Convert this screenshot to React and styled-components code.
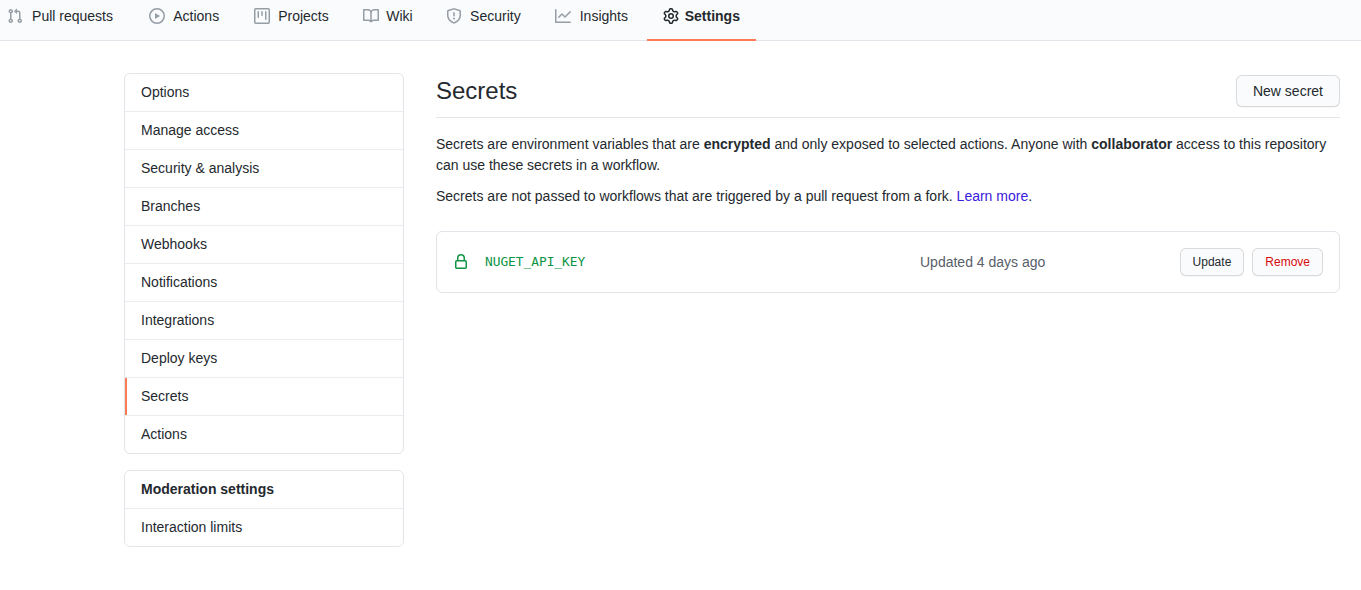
import React from "react";
import styled, { createGlobalStyle, css } from "styled-components";

const GlobalStyle = createGlobalStyle`
  *, *::before, *::after { box-sizing: border-box; }
  body {
    margin: 0;
    background: #fff;
    color: #24292e;
    font: 14px/21px "Liberation Sans", Arial, sans-serif;
    overflow: hidden;
  }
`;

const icons = {
  pull: "M7.177 3.073L9.573.677A.25.25 0 0110 .854v4.792a.25.25 0 01-.427.177L7.177 3.427a.25.25 0 010-.354zM3.75 2.5a.75.75 0 100 1.5.75.75 0 000-1.5zm-2.25.75a2.25 2.25 0 113 2.122v5.256a2.251 2.251 0 11-1.5 0V5.372A2.25 2.25 0 011.5 3.25zM11 2.5h-1V4h1a1 1 0 011 1v5.628a2.251 2.251 0 101.5 0V5A2.5 2.5 0 0011 2.5zm1 10.25a.75.75 0 111.5 0 .75.75 0 01-1.5 0zM3.75 12a.75.75 0 100 1.5.75.75 0 000-1.5z",
  play: "M1.5 8a6.5 6.5 0 1113 0 6.5 6.5 0 01-13 0zM8 0a8 8 0 100 16A8 8 0 008 0zM6.379 5.227A.25.25 0 006 5.442v5.117a.25.25 0 00.379.214l4.264-2.559a.25.25 0 000-.428L6.379 5.227z",
  project: "M1.75 0A1.75 1.75 0 000 1.75v12.5C0 15.216.784 16 1.75 16h12.5A1.75 1.75 0 0016 14.25V1.75A1.75 1.75 0 0014.25 0H1.75zM1.5 1.75a.25.25 0 01.25-.25h12.5a.25.25 0 01.25.25v12.5a.25.25 0 01-.25.25H1.75a.25.25 0 01-.25-.25V1.75zM11.75 3a.75.75 0 00-.75.75v7.5a.75.75 0 001.5 0v-7.5a.75.75 0 00-.75-.75zm-8.25.75a.75.75 0 011.5 0v5.5a.75.75 0 01-1.5 0v-5.5zM8 3a.75.75 0 00-.75.75v3.5a.75.75 0 001.5 0v-3.5A.75.75 0 008 3z",
  book: "M0 1.75A.75.75 0 01.75 1h4.253c1.227 0 2.317.59 3 1.501A3.744 3.744 0 0111.006 1h4.245a.75.75 0 01.75.75v10.5a.75.75 0 01-.75.75h-4.507a2.25 2.25 0 00-1.591.659l-.622.621a.75.75 0 01-1.06 0l-.622-.621A2.25 2.25 0 005.258 13H.75a.75.75 0 01-.75-.75V1.75zm8.755 3a2.25 2.25 0 012.25-2.25H14.5v9h-3.757c-.71 0-1.4.201-1.992.572l.004-7.322zm-1.504 7.324l.004-5.073-.002-2.253A2.25 2.25 0 005.003 2.5H1.5v9h3.757a3.75 3.75 0 011.994.574z",
  shield: "M7.467.133a1.75 1.75 0 011.066 0l5.25 1.68A1.75 1.75 0 0115 3.48V7c0 1.566-.32 3.182-1.303 4.682-.983 1.498-2.585 2.813-5.032 3.855a1.7 1.7 0 01-1.33 0c-2.447-1.042-4.049-2.357-5.032-3.855C1.32 10.182 1 8.566 1 7V3.48a1.75 1.75 0 011.217-1.667l5.25-1.68zm.61 1.429a.25.25 0 00-.153 0l-5.25 1.68a.25.25 0 00-.174.238V7c0 1.358.275 2.666 1.057 3.86.784 1.194 2.121 2.34 4.366 3.297a.2.2 0 00.154 0c2.245-.956 3.582-2.104 4.366-3.298C13.225 9.666 13.5 8.36 13.5 7V3.48a.25.25 0 00-.174-.237l-5.25-1.68zM9 10.5a1 1 0 11-2 0 1 1 0 012 0zm-.25-5.75a.75.75 0 10-1.5 0v3a.75.75 0 001.5 0v-3z",
  graph: "M1.5 1.75a.75.75 0 00-1.5 0v12.5c0 .414.336.75.75.75h14.5a.75.75 0 000-1.5H1.5V1.75zm14.28 2.53a.75.75 0 00-1.06-1.06L10 7.94 7.53 5.47a.75.75 0 00-1.06 0L3.22 8.72a.75.75 0 001.06 1.06L7 7.06l2.47 2.47a.75.75 0 001.06 0l5.25-5.25z",
  gear: "M7.429 1.525a6.593 6.593 0 011.142 0c.036.003.108.036.137.146l.289 1.105c.147.56.55.967.997 1.189.174.086.341.183.501.29.417.278.97.423 1.53.27l1.102-.303c.11-.03.175.016.195.046.219.31.41.641.573.989.014.031.022.11-.059.19l-.815.806c-.411.406-.562.957-.53 1.456a4.588 4.588 0 010 .582c-.032.499.119 1.05.53 1.456l.815.806c.08.08.073.159.059.19a6.494 6.494 0 01-.573.99c-.02.029-.086.074-.195.045l-1.103-.303c-.559-.153-1.112-.008-1.529.27-.16.107-.327.204-.5.29-.449.222-.851.628-.998 1.189l-.289 1.105c-.029.11-.101.143-.137.146a6.613 6.613 0 01-1.142 0c-.036-.003-.108-.037-.137-.146l-.289-1.105c-.147-.56-.55-.967-.997-1.189a4.502 4.502 0 01-.501-.29c-.417-.278-.97-.423-1.53-.27l-1.102.303c-.11.03-.175-.016-.195-.046a6.492 6.492 0 01-.573-.989c-.014-.031-.022-.11.059-.19l.815-.806c.411-.406.562-.957.53-1.456a4.587 4.587 0 010-.582c.032-.499-.119-1.05-.53-1.456l-.815-.806c-.08-.08-.073-.159-.059-.19a6.44 6.44 0 01.573-.99c.02-.029.086-.075.195-.045l1.103.303c.559.153 1.112.008 1.529-.27.16-.107.327-.204.5-.29.449-.222.851-.628.998-1.189l.289-1.105c.029-.11.101-.143.137-.146zM8 0c-.236 0-.47.01-.701.03-.743.065-1.29.615-1.458 1.261l-.29 1.106c-.017.066-.078.158-.211.224a5.994 5.994 0 00-.668.386c-.123.082-.233.09-.3.071L3.27 2.776c-.644-.177-1.392.02-1.82.63a7.977 7.977 0 00-.704 1.217c-.315.675-.111 1.422.363 1.891l.815.806c.05.048.098.147.088.294a6.084 6.084 0 000 .772c.01.147-.038.246-.088.294l-.815.806c-.474.469-.678 1.216-.363 1.891.2.428.436.835.704 1.218.428.609 1.176.806 1.82.63l1.103-.303c.066-.019.176-.011.299.071.213.143.436.272.668.386.133.066.194.158.212.224l.289 1.106c.169.646.715 1.196 1.458 1.26a8.094 8.094 0 001.402 0c.743-.064 1.29-.614 1.458-1.26l.29-1.106c.017-.066.078-.158.211-.224a5.98 5.98 0 00.668-.386c.123-.082.233-.09.3-.071l1.102.302c.644.177 1.392-.02 1.82-.63.268-.382.505-.789.704-1.217.315-.675.111-1.422-.364-1.891l-.814-.806c-.05-.048-.098-.147-.088-.294a6.1 6.1 0 000-.772c-.01-.147.039-.246.088-.294l.814-.806c.475-.469.679-1.216.364-1.891a7.992 7.992 0 00-.704-1.218c-.428-.609-1.176-.806-1.82-.63l-1.103.303c-.066.019-.176.011-.299-.071a5.991 5.991 0 00-.668-.386c-.133-.066-.194-.158-.212-.224L10.16 1.29C9.99.645 9.444.095 8.701.031A8.094 8.094 0 008 0zm1.5 8a1.5 1.5 0 11-3 0 1.5 1.5 0 013 0zM11 8a3 3 0 11-6 0 3 3 0 016 0z",
  lock: "M4 4v2h-.25A1.75 1.75 0 002 7.75v5.5c0 .966.784 1.75 1.75 1.75h8.5A1.75 1.75 0 0014 13.25v-5.5A1.75 1.75 0 0012.25 6H12V4a4 4 0 10-8 0zm6.5 2V4a2.5 2.5 0 00-5 0v2h5zM12 7.5h.25a.25.25 0 01.25.25v5.5a.25.25 0 01-.25.25h-8.5a.25.25 0 01-.25-.25v-5.5a.25.25 0 01.25-.25H12z",
};

const Svg = styled.svg`
  display: block;
  flex: none;
  width: 16px;
  height: 16px;
  fill: currentColor;
`;

const Icon = ({ name }) => (
  <Svg viewBox="0 0 16 16" aria-hidden="true">
    <path fillRule="evenodd" d={icons[name]} />
  </Svg>
);

const RepoNav = styled.nav`
  display: flex;
  height: 41px;
  padding-right: 16px;
  background: #fafbfc;
  border-bottom: 1px solid #e1e4e8;
`;

const Tab = styled.a`
  display: flex;
  align-items: flex-start;
  gap: 6px;
  height: 41px;
  padding: 8px 16px 0;
  color: #24292e;
  border-bottom: 2px solid transparent;

  &:first-child { padding-left: 6.6px; }

  ${Svg} { color: #959da5; }

  ${({ $selected }) => $selected && css`
    font-weight: 700;
    border-bottom-color: #fd7b53;
    ${Svg} { color: #24292e; }
  `}
`;

/* The hidden bold copy keeps a tab's width the same when it is selected. */
const TabLabel = styled.span`
  display: flex;
  flex-direction: column;
  align-items: center;
  margin-top: -2px;

  &::after {
    content: attr(data-content);
    height: 0;
    overflow: hidden;
    visibility: hidden;
    font-weight: 700;
  }
`;

const Page = styled.div`
  display: flex;
  gap: 32px;
  width: 1216px;
  margin: 32px 0 0 124px;
`;

const Sidebar = styled.aside`
  display: flex;
  flex: none;
  flex-direction: column;
  gap: 16px;
  width: 280px;
`;

const Menu = styled.nav`
  border: 1px solid #e1e4e8;
  border-radius: 6px;
  overflow: hidden;
`;

const MenuHeading = styled.div`
  padding: 8px 16px;
  border-bottom: 1px solid #eaecef;
  font-weight: 700;
`;

const MenuItem = styled.a`
  display: block;
  padding: 8px 16px;

  & + & { border-top: 1px solid #eaecef; }

  ${({ $selected }) => $selected && css`box-shadow: inset 2px 0 0 #fd7b53;`}
`;

const Main = styled.main`
  flex: 1;
  min-width: 0;
`;

const Subhead = styled.header`
  display: flex;
  align-items: center;
  justify-content: space-between;
  height: 45px;
  padding: 2px 0 10px;
  margin-bottom: 16px;
  border-bottom: 1px solid #e1e4e8;
`;

const Title = styled.h2`
  margin: 0;
  font-size: 24px;
  font-weight: 400;
  line-height: 32px;
`;

const Button = styled.button`
  padding: ${({ $small }) => ($small ? "3px 12px" : "5px 16px")};
  color: ${({ $danger }) => ($danger ? "#d80a0a" : "#24292e")};
  font: inherit;
  font-size: ${({ $small }) => ($small ? "12px" : "14px")};
  line-height: 20px;
  white-space: nowrap;
  background: #fafbfc;
  border: 1px solid rgba(27, 31, 35, 0.15);
  border-radius: 6px;
  box-shadow: 0 1px 0 rgba(27, 31, 35, 0.04), inset 0 1px 0 rgba(255, 255, 255, 0.25);
`;

const Paragraph = styled.p`
  margin: 0 0 10px;
`;

const Link = styled.a`
  color: #3a20dc;
`;

const SecretRow = styled.section`
  display: flex;
  align-items: center;
  height: 62px;
  margin-top: 24px;
  padding: 0 16px;
  border: 1px solid #e1e4e8;
  border-radius: 6px;
`;

const SecretName = styled.div`
  display: flex;
  align-items: center;
  gap: 16px;
  width: 467px;
  color: #0c9444;
`;

const Code = styled.code`
  font: 12.8px/18px "DejaVu Sans Mono", monospace;
`;

const Updated = styled.span`
  flex: 1;
  color: #586069;
`;

const Actions = styled.div`
  display: flex;
  gap: 8px;
`;

const tabs = [
  ["pull", "Pull requests"],
  ["play", "Actions"],
  ["project", "Projects"],
  ["book", "Wiki"],
  ["shield", "Security"],
  ["graph", "Insights"],
  ["gear", "Settings"],
];

const settings = [
  "Options",
  "Manage access",
  "Security & analysis",
  "Branches",
  "Webhooks",
  "Notifications",
  "Integrations",
  "Deploy keys",
  "Secrets",
  "Actions",
];

export default function App() {
  return (
    <>
      <GlobalStyle />
      <RepoNav>
        {tabs.map(([icon, label]) => (
          <Tab key={label} $selected={label === "Settings"}>
            <Icon name={icon} />
            <TabLabel data-content={label}>{label}</TabLabel>
          </Tab>
        ))}
      </RepoNav>
      <Page>
        <Sidebar>
          <Menu>
            {settings.map((label) => (
              <MenuItem key={label} $selected={label === "Secrets"}>{label}</MenuItem>
            ))}
          </Menu>
          <Menu>
            <MenuHeading>Moderation settings</MenuHeading>
            <MenuItem>Interaction limits</MenuItem>
          </Menu>
        </Sidebar>
        <Main>
          <Subhead>
            <Title>Secrets</Title>
            <Button>New secret</Button>
          </Subhead>
          <Paragraph>
            Secrets are environment variables that are <strong>encrypted</strong> and only exposed to
            selected actions. Anyone with <strong>collaborator</strong> access to this repository can
            use these secrets in a workflow.
          </Paragraph>
          <Paragraph>
            Secrets are not passed to workflows that are triggered by a pull request from a
            fork. <Link>Learn more</Link>.
          </Paragraph>
          <SecretRow>
            <SecretName>
              <Icon name="lock" />
              <Code>NUGET_API_KEY</Code>
            </SecretName>
            <Updated>Updated 4 days ago</Updated>
            <Actions>
              <Button $small>Update</Button>
              <Button $small $danger>Remove</Button>
            </Actions>
          </SecretRow>
        </Main>
      </Page>
    </>
  );
}
